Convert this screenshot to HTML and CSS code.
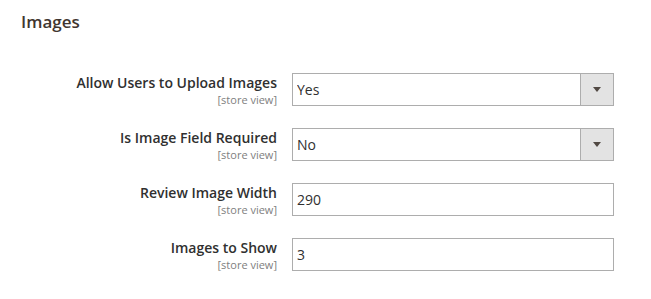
FILE: index.html
```html
<!DOCTYPE html>
<html lang="en">
<head>
    <meta charset="UTF-8">
    <meta name="viewport" content="width=device-width, initial-scale=1.0">
    <title>Images</title>
    <link rel="stylesheet" href="styles.css">
</head>
<body>
    <div class="section">
        <h2 class="section-title">Images</h2>

        <div class="fields">
            <div class="field">
                <label class="field-label" for="allow-upload">
                    <span>Allow Users to Upload Images</span>
                    <span class="scope">[store view]</span>
                </label>
                <div class="select-wrap">
                    <select id="allow-upload" class="select">
                        <option selected>Yes</option>
                        <option>No</option>
                    </select>
                    <span class="select-arrow"></span>
                </div>
            </div>

            <div class="field">
                <label class="field-label" for="image-required">
                    <span>Is Image Field Required</span>
                    <span class="scope">[store view]</span>
                </label>
                <div class="select-wrap">
                    <select id="image-required" class="select">
                        <option>Yes</option>
                        <option selected>No</option>
                    </select>
                    <span class="select-arrow"></span>
                </div>
            </div>

            <div class="field">
                <label class="field-label" for="image-width">
                    <span>Review Image Width</span>
                    <span class="scope">[store view]</span>
                </label>
                <input type="text" id="image-width" class="text-input" value="290">
            </div>

            <div class="field">
                <label class="field-label" for="images-show">
                    <span>Images to Show</span>
                    <span class="scope">[store view]</span>
                </label>
                <input type="text" id="images-show" class="text-input" value="3">
            </div>
        </div>
    </div>
</body>
</html>
```

FILE: styles.css
```css
body {
    margin: 0;
    background: #fff;
    font-family: "Open Sans", "Liberation Sans", sans-serif;
    color: #303030;
}
.section {
    padding: 10px 20px 0 21px;
}
.section-title {
    margin: 0;
    font-size: 17px;
    font-weight: 600;
    line-height: 23px;
    color: #41362f;
}
.fields {
    display: flex;
    flex-direction: column;
    gap: 22px;
    margin-top: 40px;
}
.field {
    display: flex;
    align-items: flex-start;
    gap: 15px;
    margin-left: -21px;
}
.field-label {
    width: 277px;
    display: flex;
    flex-direction: column;
    align-items: flex-end;
    text-align: right;
    font-size: 14px;
    font-weight: 600;
    line-height: 19px;
}
.scope {
    display: block;
    font-size: 11px;
    font-weight: 400;
    line-height: 13px;
    color: #808080;
    margin-top: 1px;
}
.select-wrap {
    display: flex;
    width: 320px;
    height: 31px;
    border: 1px solid #adadad;
    background: #fff;
}
.select {
    flex: 1;
    appearance: none;
    -webkit-appearance: none;
    border: none;
    background: transparent;
    font-family: inherit;
    font-size: 14px;
    color: #303030;
    padding: 0 0 0 4px;
    margin: 0;
    outline: none;
}
.select-arrow {
    width: 32px;
    border-left: 1px solid #adadad;
    background: #e3e3e3;
    display: flex;
    align-items: center;
    justify-content: center;
}
.select-arrow::after {
    content: "";
    width: 0;
    height: 0;
    border-left: 4px solid transparent;
    border-right: 4px solid transparent;
    border-top: 5px solid #514943;
}
.text-input {
    box-sizing: border-box;
    width: 322px;
    height: 33px;
    margin: 0;
    border: 1px solid #adadad;
    border-radius: 0;
    padding: 0 0 0 4px;
    font-family: inherit;
    font-size: 14px;
    color: #303030;
    outline: none;
}
```
